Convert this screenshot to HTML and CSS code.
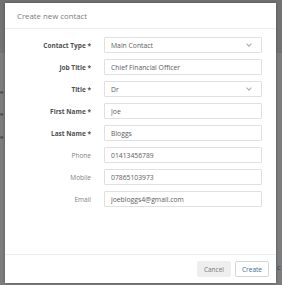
FILE: index.html
```html
<!DOCTYPE html>
<html lang="en">
  <head>
    <meta charset="UTF-8" />
    <meta name="viewport" content="width=device-width, initial-scale=1.0" />
    <title>Create new contact</title>
    <link rel="stylesheet" href="styles.css">
  </head>
  <body>
    <div class="backdrop">
      <span class="bg-text t1">e</span>
      <span class="bg-text t2">e</span>
      <span class="bg-text t3">e</span>
      <span class="bg-text t4">C</span>
    </div>
    <div class="modal">
      <div class="modal-header">
        <h4>Create new contact</h4>
      </div>
      <form class="modal-body">
        <div class="form-row">
          <label class="req">Contact Type *</label>
          <div class="select">Main Contact<span class="chevron"></span></div>
        </div>
        <div class="form-row">
          <label class="req">Job Title *</label>
          <input type="text" value="Chief Financial Officer" />
        </div>
        <div class="form-row">
          <label class="req">Title *</label>
          <div class="select">Dr<span class="chevron"></span></div>
        </div>
        <div class="form-row">
          <label class="req">First Name *</label>
          <input type="text" value="Joe" />
        </div>
        <div class="form-row">
          <label class="req">Last Name *</label>
          <input type="text" value="Bloggs" />
        </div>
        <div class="form-row">
          <label>Phone</label>
          <input type="text" value="01413456789" />
        </div>
        <div class="form-row">
          <label>Mobile</label>
          <input type="text" value="07865103973" />
        </div>
        <div class="form-row">
          <label>Email</label>
          <input type="text" value="joebloggs4@gmail.com" />
        </div>
      </form>
      <div class="modal-footer">
        <button type="button" class="btn-cancel">Cancel</button>
        <button type="button" class="btn-create">Create</button>
      </div>
    </div>
  </body>
</html>
```

FILE: styles.css
```css
body {
  margin: 0;
  padding: 3px 0 0 5px;
  height: 285px;
  box-sizing: border-box;
  background-color: #7b7b7b;
  font-family: "Open Sans", sans-serif;
  overflow: hidden;
}
.backdrop {
  position: absolute;
  inset: 0;
  background: linear-gradient(#727272 0, #727272 53px, #7d7d7d 53px);
}
.bg-text {
  position: absolute;
  font-size: 6px;
  color: #2e2e2e;
}
.t1 { left: 0; top: 88px; }
.t2 { left: 0; top: 110px; }
.t3 { left: 0; top: 133px; }
.t4 { left: 277px; top: 264px; color: #1d3550; }
.modal {
  position: relative;
  width: 271px;
  height: 280px;
  background-color: #fff;
  display: flex;
  flex-direction: column;
  box-shadow: 0 0 3px rgba(0, 0, 0, 0.3);
}
.modal-header {
  height: 25px;
  border-bottom: 1px solid #ececec;
  padding-left: 12px;
  display: flex;
  align-items: center;
}
.modal-header h4 {
  margin: 0;
  font-size: 7.8px;
  font-weight: 400;
  color: #7a7a7a;
}
.modal-body {
  flex: 1;
  margin: 0;
  padding: 8px 0 0 0;
  display: flex;
  flex-direction: column;
  gap: 6px;
}
.form-row {
  display: grid;
  grid-template-columns: 86px 158px;
  column-gap: 13px;
  align-items: center;
}
.form-row label {
  text-align: right;
  font-size: 6.5px;
  color: #808080;
}
.form-row label.req {
  font-weight: 700;
  color: #505050;
}
.form-row input,
.select {
  box-sizing: border-box;
  height: 16px;
  margin: 0;
  padding: 0 0 0 6px;
  border: 1px solid #e0e0e0;
  border-radius: 1px;
  font-family: "Open Sans", sans-serif;
  font-size: 6.8px;
  color: #5c5c5c;
  background: #fff;
  outline: none;
}
.select {
  display: flex;
  align-items: center;
  justify-content: space-between;
  padding-right: 10px;
}
.chevron {
  width: 3px;
  height: 3px;
  border-right: 1px solid #aaa;
  border-bottom: 1px solid #aaa;
  transform: translateY(-1px) rotate(45deg);
}
.modal-footer {
  height: 28px;
  border-top: 1px solid #ececec;
  display: flex;
  justify-content: flex-end;
  align-items: center;
  gap: 4px;
  padding-right: 7px;
}
.modal-footer button {
  height: 16px;
  padding: 0 6px;
  font-family: "Open Sans", sans-serif;
  font-size: 6.5px;
  border-radius: 2px;
  cursor: pointer;
}
.btn-cancel {
  background-color: #eee;
  border: 1px solid #eee;
  color: #777;
}
.btn-create {
  background-color: #fff;
  border: 1px solid #cfd6de;
  color: #3b6a99;
}
```
